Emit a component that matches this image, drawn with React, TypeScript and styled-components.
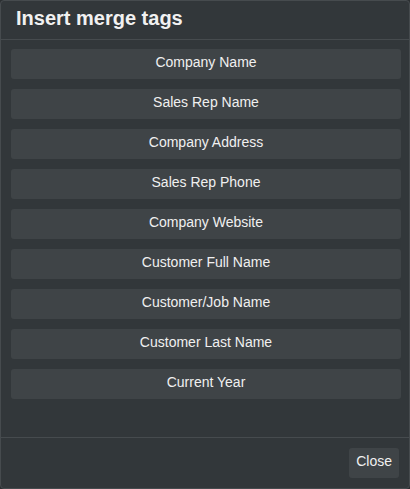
import React from "react";
import styled, { createGlobalStyle } from "styled-components";

const GlobalStyle = createGlobalStyle`
  html, body {
    margin: 0;
    padding: 0;
    background: #2b2f31;
    font-family: "Liberation Sans", Arial, sans-serif;
  }
`;

const Dialog = styled.div`
  box-sizing: border-box;
  width: 410px;
  height: 489px;
  display: flex;
  flex-direction: column;
  background: #32373a;
  border: 1px solid #464b4e;
  border-radius: 4px;
  overflow: hidden;
`;

const Header = styled.div`
  box-sizing: border-box;
  height: 39px;
  display: flex;
  align-items: center;
  padding: 0 15px 3px;
  border-bottom: 1px solid #464b4e;
`;

const Title = styled.h3`
  margin: 0;
  font-size: 20px;
  font-weight: bold;
  color: #f1f1f1;
`;

const Body = styled.div`
  flex: 1;
  display: flex;
  flex-direction: column;
  gap: 10px;
  padding: 9px 8px 8px 10px;
`;

const TagButton = styled.button`
  box-sizing: border-box;
  height: 30px;
  border: none;
  border-radius: 3px;
  background: #3f4447;
  color: #f0f0f0;
  font-family: inherit;
  font-size: 14px;
  cursor: pointer;
  padding: 0 0 5px;
`;

const Footer = styled.div`
  height: 51px;
  box-sizing: border-box;
  display: flex;
  justify-content: flex-end;
  align-items: center;
  padding: 0 10px;
  border-top: 1px solid #464b4e;
`;

const CloseButton = styled.button`
  box-sizing: border-box;
  height: 30px;
  padding: 0 7px 5px;
  border: none;
  border-radius: 3px;
  background: #3f4447;
  color: #f0f0f0;
  font-family: inherit;
  font-size: 14px;
  cursor: pointer;
`;

const tags = [
  "Company Name",
  "Sales Rep Name",
  "Company Address",
  "Sales Rep Phone",
  "Company Website",
  "Customer Full Name",
  "Customer/Job Name",
  "Customer Last Name",
  "Current Year",
];

export default function App() {
  return (
    <>
      <GlobalStyle />
      <Dialog>
        <Header>
          <Title>Insert merge tags</Title>
        </Header>
        <Body>
          {tags.map((t) => (
            <TagButton key={t}>{t}</TagButton>
          ))}
        </Body>
        <Footer>
          <CloseButton>Close</CloseButton>
        </Footer>
      </Dialog>
    </>
  );
}
